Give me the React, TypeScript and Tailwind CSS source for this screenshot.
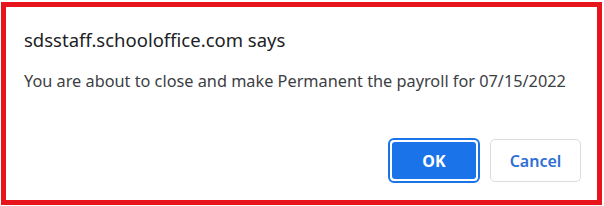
export default function App() {
  return (
    <div className="w-[604px] h-[206px] bg-white pt-[2px] pl-[1px]">
      <div
        className="w-[601px] h-[203px] border-[5px] border-[#e8141c] bg-white flex flex-col"
        style={{ fontFamily: '"Noto Sans", "Open Sans", sans-serif' }}
      >
        <div className="pl-[18px] pt-[20px] text-[18.5px] leading-[26px] text-[#202124]">
          sdsstaff.schooloffice.com says
        </div>
        <div className="pl-[18px] pt-[17px] text-[16.3px] leading-[22px] text-[#3c4043]">
          You are about to close and make Permanent the payroll for 07/15/2022
        </div>
        <div className="flex justify-end gap-[10px] pr-[16px] mt-auto mb-[17px]">
          <button className="w-[92px] h-[45px] rounded-[6px] border-2 border-[#1a73e8] p-[2px] bg-white">
            <span className="flex w-full h-full items-center justify-center rounded-[3px] bg-[#1a73e8] text-white text-[16px] font-bold">
              OK
            </span>
          </button>
          <button className="w-[91px] h-[43px] mt-[1px] rounded-[5px] border border-[#dadce0] bg-white text-[#2f6fd6] text-[16px] font-semibold">
            Cancel
          </button>
        </div>
      </div>
    </div>
  );
}
